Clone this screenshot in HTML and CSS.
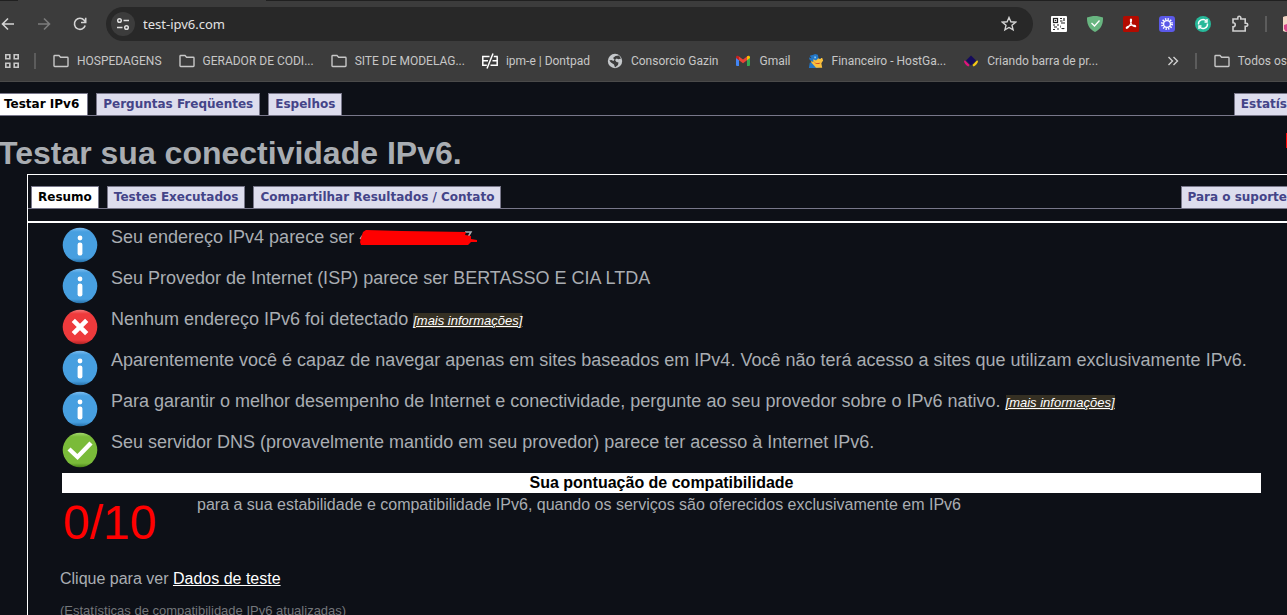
FILE: index.html
```html
<!DOCTYPE html>
<html lang="pt-BR">
<head>
<meta charset="UTF-8">
<meta name="viewport" content="width=device-width, initial-scale=1.0">
<title>Testar sua conectividade IPv6.</title>
<link rel="stylesheet" href="styles.css">
</head>
<body>

<svg class="defs" width="0" height="0">
    <defs>
        <linearGradient id="blue" x1="0" y1="0" x2="0" y2="1">
            <stop offset="0" stop-color="#7dbdf0"/><stop offset=".12" stop-color="#479fe0"/><stop offset=".88" stop-color="#479fe0"/><stop offset="1" stop-color="#256da5"/>
        </linearGradient>
        <linearGradient id="red" x1="0" y1="0" x2="0" y2="1">
            <stop offset="0" stop-color="#f47c7c"/><stop offset=".12" stop-color="#ee3a3c"/><stop offset=".88" stop-color="#ee3a3c"/><stop offset="1" stop-color="#a92022"/>
        </linearGradient>
        <linearGradient id="green" x1="0" y1="0" x2="0" y2="1">
            <stop offset="0" stop-color="#a5d66e"/><stop offset=".12" stop-color="#7abb39"/><stop offset=".88" stop-color="#7abb39"/><stop offset="1" stop-color="#4b8219"/>
        </linearGradient>
        <symbol id="info" viewBox="0 0 36 36">
            <circle cx="18" cy="18" r="17.3" fill="url(#blue)"/>
            <circle cx="18" cy="11" r="2.4" fill="#fff"/>
            <rect x="15.6" y="15.5" width="4.8" height="13" rx="2.2" fill="#fff"/>
        </symbol>
        <symbol id="fail" viewBox="0 0 36 36">
            <circle cx="18" cy="18" r="17.3" fill="url(#red)"/>
            <path d="M11.3 11.3l13.4 13.4M24.7 11.3L11.3 24.7" stroke="#fff" stroke-width="4.6"/>
        </symbol>
        <symbol id="ok" viewBox="0 0 36 36">
            <circle cx="18" cy="18" r="17.3" fill="url(#green)"/>
            <path d="M7 17l8.500 8L29 11" fill="none" stroke="#fff" stroke-width="4.400"/>
        </symbol>
        <symbol id="folder" viewBox="0 0 16 14">
            <path d="M1.700 1.500H6l1.600 1.800h6.700c.4 0 .7.300.7.700v7.800c0 .4-.3.700-.7.700H1.700c-.4 0-.7-.3-.7-.7V2.200c0-.4.3-.7.700-.7z" fill="none" stroke="#c7c7c7" stroke-width="1.400"/>
        </symbol>
    </defs>
</svg>

<header class="browser">
    <div class="strip"><span class="active-tab"></span></div>
    <div class="toolbar">
        <div class="nav">
            <button class="icon-btn" aria-label="Voltar"><svg width="16" height="16" viewBox="0 0 16 16" fill="none" stroke="#d4d4d4" stroke-width="1.600"><path d="M14 8H3M8 2.500L2.500 8 8 13.500"/></svg></button>
            <button class="icon-btn" aria-label="Avançar"><svg width="16" height="16" viewBox="0 0 16 16" fill="none" stroke="#7c7c7c" stroke-width="1.600"><path d="M2 8h11M8 2.500L13.500 8 8 13.500"/></svg></button>
            <button class="icon-btn" aria-label="Recarregar"><svg width="16" height="16" viewBox="0 0 16 16" fill="none" stroke="#d4d4d4" stroke-width="1.600"><path d="M13.200 9.500A5.500 5.500 0 1 1 12.200 4.300L13.500 6"/><path d="M13.700 1.800v4.700H9"/></svg></button>
        </div>
        <div class="omnibox">
            <button class="site-info" aria-label="Informações do site"><svg width="14" height="14" viewBox="0 0 14 14" fill="none" stroke="#dedede" stroke-width="1.500"><circle cx="3.500" cy="3.500" r="1.800"/><path d="M7.500 3.500H13M1 10.500h5.500"/><circle cx="10.500" cy="10.500" r="1.800"/></svg></button>
            <input class="url" type="text" value="test-ipv6.com" aria-label="Endereço">
            <button class="icon-btn" aria-label="Favorito"><svg width="16" height="16" viewBox="0 0 16 16" fill="none" stroke="#d4d4d4" stroke-width="1.400"><path d="M8 1.500l1.900 4.300 4.700.4-3.600 3.100 1.100 4.600L8 11.500l-4.100 2.400L5 9.300 1.400 6.200l4.700-.4z"/></svg></button>
        </div>
        <div class="extensions">
            <svg width="16" height="16" viewBox="0 0 16 16"><rect width="16" height="16" rx="1" fill="#fff"/><g fill="none" stroke="#222" stroke-width="1.200"><rect x="2.500" y="2.500" width="4" height="4"/><path d="M9 2.500h2M13 2v3M9 5h2.500M10 7h4M2 9h2M6 9h2M3 11h3M2 13.500h2M6 13h2"/></g><circle cx="4.500" cy="4.500" r=".8" fill="#222"/><path d="M10 9v3h4a2.300 2.300 0 1 1-4-3z" fill="#222"/></svg>
            <svg width="16" height="16" viewBox="1 1 16 16"><path d="M9 1c2.500 0 6 .7 8 1.500C17.200 10 14.500 14 9 17 3.500 14 .8 10 1 2.500 3 1.700 6.500 1 9 1z" fill="#68b580"/><path d="M5.500 8l3 3 5-5.500" fill="none" stroke="#fff" stroke-width="1.300"/></svg>
            <svg width="16" height="16" viewBox="0 0 16 16"><rect width="16" height="16" rx="1.500" fill="#b30b00"/><path d="M7.800 3c1.300-.2.800 3-1 6.200-1.200 2.200-3 3.600-3.500 3-.7-.8 2.500-2.500 5.200-2.900 2.300-.3 4.200.1 4.200.9 0 1-2.300.4-3.700-1.300C7.500 7 6.800 3.200 7.800 3z" fill="none" stroke="#fff" stroke-width="1.100"/></svg>
            <svg width="16" height="16" viewBox="0 0 16 16"><rect width="16" height="16" rx="3" fill="#5b59e8"/><circle cx="8" cy="8" r="3.400" fill="none" stroke="#fff" stroke-width="1.300"/><circle cx="8" cy="8" r="5" fill="none" stroke="#fff" stroke-width="1.900" stroke-dasharray="1.300 1.318"/></svg>
            <svg width="16" height="16" viewBox="0 0 16 16"><circle cx="8" cy="8" r="8" fill="#27b99a"/><g fill="none" stroke="#fff" stroke-width="1.400"><path d="M3.500 8.500A4.500 4.500 0 0 1 11.300 5M12.500 7.500A4.500 4.500 0 0 1 4.700 11"/><path d="M12 3v3H9.500M4 13v-3h2.500"/></g></svg>
            <svg width="18" height="18" viewBox="0 0 18 18" fill="none" stroke="#d0d0d0" stroke-width="1.600"><path d="M2 4h4.800V2.800a1.500 1.500 0 0 1 3 0V4h4.400v4.300h1a1.500 1.500 0 0 1 0 3h-1V16H2v-4.200c3 0 3-4 0-4z"/></svg>
            <span class="divider"></span>
            <svg class="avatar" width="4" height="16" viewBox="0 0 4 16"><path d="M4 0a8 8 0 0 0 0 16z" fill="#f3d5c5"/><path d="M1 9l3-1v8a8 8 0 0 1-3-3z" fill="#d8458b"/></svg>
        </div>
    </div>
    <nav class="bookmarks">
        <button class="apps" aria-label="Apps"><svg width="16" height="16" viewBox="0 0 16 16" fill="none" stroke="#c7c7c7" stroke-width="1.600"><path d="M1.800 1.800h4v4h-4zM10.200 1.800h4v4h-4zM1.800 10.200h4v4h-4zM10.200 10.200h4v4h-4z"/></svg></button>
        <span class="divider"></span>
        <a class="bookmark" href="#"><svg width="16" height="14"><use href="#folder"/></svg>HOSPEDAGENS</a>
        <a class="bookmark" href="#"><svg width="16" height="14"><use href="#folder"/></svg>GERADOR DE CODI...</a>
        <a class="bookmark" href="#"><svg width="16" height="14"><use href="#folder"/></svg>SITE DE MODELAG...</a>
        <a class="bookmark" href="#"><svg width="16" height="16" viewBox="0 0 16 16" fill="none" stroke="#fff" stroke-width="1.500"><path d="M7.500 3.500H.8v8.800h4M1 7.800h5M15.800 3.500h-4M10.500 7.800h5M8.500 12.300h6.700V3.500M11 .5L5 15.500"/></svg>ipm-e | Dontpad</a>
        <a class="bookmark" href="#"><svg width="16" height="16" viewBox="0 0 16 16"><circle cx="8" cy="8" r="7.200" fill="#c5c8cb"/><path d="M8.500 3l3.500-.5 2 3-2.500.7-2-.7-1.500 1.500L9.500 9l2 .5-.5 2.500-3 2.500-1-3-3-2-1.700-2 2-.5L6.500 8l1-1.500L6 5z" fill="#3c3c3c"/></svg>Consorcio Gazin</a>
        <a class="bookmark" href="#"><svg width="16" height="16" viewBox="0 0 16 16"><path d="M1 4.500l3 2.200V13H2a1 1 0 0 1-1-1z" fill="#4285f4"/><path d="M15 4.500l-3 2.200V13h2a1 1 0 0 0 1-1z" fill="#34a853"/><path d="M4 3.500l4 3 4-3v3.700l-4 3-4-3z" fill="#ea4335"/><path d="M1 4.500C1 2.500 2.800 2.200 4 3.300v3.900L1 5z" fill="#c5221f"/><path d="M15 4.500c0-2-1.800-2.300-3-1.200v3.900L15 5z" fill="#fbbc04"/></svg>Gmail</a>
        <a class="bookmark" href="#"><svg width="16" height="16" viewBox="0 0 18 16"><path d="M2 2l4-1 2-1 3 1 1 4-2 4 2 7H1l1-6 3-1-3-2-1-3 3 1z" fill="#2377c8"/><path d="M6 6l3 1.500 2-2 1-1h4l1 3-2 3 1 5H9L4 10l-1-2 3 1z" fill="#fac03d"/><path d="M6 8l3 2.500 5-.5-1.500 1.500H9z" fill="#d2492d"/><path d="M7 3h2v2H7z" fill="#82c5ef"/><path d="M12 4h2.500v1.500H12z" fill="#123866"/></svg>Financeiro - HostGa...</a>
        <a class="bookmark" href="#"><svg width="16" height="16" viewBox="0 0 16 16"><path d="M8 2.500l5 5-5 5-5-5z" fill="#160b5c"/><path d="M1.800 7.200l4.700 4.800-1 1.400C3.500 13 1.500 10.500 1 8.500z" fill="#e4127f"/><path d="M14.200 7.200L9.500 12l1 1.400c2-.4 4-2.900 4.500-4.900z" fill="#f6c915"/></svg>Criando barra de pr...</a>
        <button class="more" aria-label="Mais favoritos"><svg width="12" height="12" viewBox="0 0 12 12" fill="none" stroke="#d0d0d0" stroke-width="1.400"><path d="M1.500 2l4 4-4 4M6.500 2l4 4-4 4"/></svg></button>
        <span class="divider"></span>
        <a class="bookmark" href="#"><svg width="16" height="14"><use href="#folder"/></svg>Todos os</a>
    </nav>
</header>

<main class="page">
    <nav class="tabs">
        <a class="tab current" href="#">Testar IPv6</a>
        <a class="tab" href="#">Perguntas Freqüentes</a>
        <a class="tab" href="#">Espelhos</a>
        <a class="tab last" href="#">Estatís</a>
    </nav>

    <div class="title-row">
        <h1>Testar sua conectividade IPv6.</h1>
        <span class="mark"></span>
    </div>

    <section class="panel">
        <nav class="tabs inner">
            <a class="tab current" href="#">Resumo</a>
            <a class="tab" href="#">Testes Executados</a>
            <a class="tab" href="#">Compartilhar Resultados / Contato</a>
            <a class="tab last" href="#">Para o suporte</a>
        </nav>

        <div class="results">
            <ul class="checks">
                <li><svg class="status"><use href="#info"/></svg><span>Seu endereço IPv4 parece ser <svg class="scribble" width="118" height="18" viewBox="0 0 118 18"><path d="M1 10l3-4M106 3h6l-3 5" fill="none" stroke="#a9adb2" stroke-width="1.500"/><path d="M4 3l3-2 36 1 64 1-1 3 6 1v3l6 1v2h-6l-3 3H2l-1-3 1-4z" fill="#f00"/></svg></span></li>
                <li><svg class="status"><use href="#info"/></svg><span>Seu Provedor de Internet (ISP) parece ser BERTASSO E CIA LTDA</span></li>
                <li><svg class="status"><use href="#fail"/></svg><span>Nenhum endereço IPv6 foi detectado <a class="details" href="#">[mais informações]</a></span></li>
                <li><svg class="status"><use href="#info"/></svg><span>Aparentemente você é capaz de navegar apenas em sites baseados em IPv4. Você não terá acesso a sites que utilizam exclusivamente IPv6.</span></li>
                <li><svg class="status"><use href="#info"/></svg><span>Para garantir o melhor desempenho de Internet e conectividade, pergunte ao seu provedor sobre o IPv6 nativo. <a class="details" href="#">[mais informações]</a></span></li>
                <li><svg class="status"><use href="#ok"/></svg><span>Seu servidor DNS (provavelmente mantido em seu provedor) parece ter acesso à Internet IPv6.</span></li>
            </ul>

            <h2 class="score-title">Sua pontuação de compatibilidade</h2>
            <div class="score-row">
                <span class="score">0/10</span>
                <span>para a sua estabilidade e compatibilidade IPv6, quando os serviços são oferecidos exclusivamente em IPv6</span>
            </div>

            <p class="test-data">Clique para ver <a href="#">Dados de teste</a></p>
            <p class="updated">(Estatísticas de compatibilidade IPv6 atualizadas)</p>
        </div>
    </section>
</main>

</body>
</html>
```
FILE: styles.css
```css
* {
    box-sizing: border-box;
}
body {
    margin: 0;
    height: 100vh;
    overflow: hidden;
    background-color: #0d1017;
    color: #a9adb2;
    font-family: "Liberation Sans", Arial, sans-serif;
    font-size: 16px;
}
svg {
    flex-shrink: 0;
}
button {
    display: flex;
    align-items: center;
    justify-content: center;
    padding: 0;
    border: none;
    background: none;
    cursor: pointer;
}
.defs {
    position: absolute;
}

/* browser bar */
.browser {
    height: 82px;
    background-color: #3c3c3c;
    border-bottom: 1px solid #4a4a4a;
    font-family: "Noto Sans", "Open Sans", sans-serif;
}
.strip {
    height: 1px;
    padding-left: 18px;
    background-color: #202020;
}
.active-tab {
    display: block;
    width: 248px;
    height: 1px;
    background-color: #3c3c3c;
}
.toolbar {
    display: flex;
    align-items: center;
    height: 46px;
}
.nav {
    display: flex;
    gap: 20px;
    width: 106px;
}
.icon-btn {
    width: 16px;
    height: 16px;
}
.omnibox {
    display: flex;
    flex: 1;
    align-items: center;
    height: 34px;
    padding: 0 16px 0 5px;
    border-radius: 17px;
    background-color: #282828;
}
.site-info {
    width: 24px;
    height: 24px;
    border-radius: 12px;
    background-color: #3c3c3c;
}
.url {
    flex: 1;
    min-width: 0;
    padding: 0 8px;
    border: none;
    outline: none;
    background: none;
    color: #e3e3e3;
    font-family: inherit;
    font-size: 13px;
}
.extensions {
    display: flex;
    align-items: center;
    gap: 20px;
    padding-left: 18px;
}
.divider {
    width: 2px;
    height: 16px;
    background-color: #5c5c5c;
}
.extensions .divider,
.avatar {
    margin-left: -4px;
}
.bookmarks {
    display: flex;
    align-items: center;
    height: 28px;
    padding-left: 4px;
    white-space: nowrap;
}
.apps {
    margin-right: 14px;
}
.bookmark {
    display: flex;
    align-items: center;
    gap: 8px;
    margin-left: 17px;
    color: #c7c7c7;
    font-family: Roboto, "Noto Sans", sans-serif;
    font-size: 12px;
    text-decoration: none;
}
.more {
    margin-left: auto;
    margin-right: 16px;
}

/* tabs */
.tabs {
    display: flex;
    gap: 8px;
    padding-top: 11px;
    border-bottom: 1px solid #78778a;
}
.tab {
    height: 22px;
    padding: 0 6px;
    border: 1px solid #78778a;
    border-bottom: none;
    background-color: #dddded;
    color: #444488;
    font-family: "DejaVu Sans", Verdana, sans-serif;
    font-size: 12px;
    font-weight: bold;
    line-height: 21px;
    text-decoration: none;
    white-space: nowrap;
}
.tab.current {
    background-color: #fff;
    color: #000;
}
.tab.last {
    margin-left: auto;
    padding-right: 0;
    border-right: none;
}
.page > .tabs .current {
    padding: 0 8px 0 4px;
    border-left: none;
}
.inner {
    padding-left: 3px;
}

.title-row {
    display: flex;
    justify-content: space-between;
    padding-top: 17px;
}
h1 {
    margin: 0 0 0 -2px;
    font-size: 32px;
    line-height: 41px;
}
.mark {
    width: 1px;
    height: 15px;
    background-color: #f00;
}
.panel {
    margin-left: 27px;
    border-top: 1px solid #fff;
    border-left: 1px solid #fff;
}
.results {
    margin-top: 12px;
    padding: 4px 26px 0 34px;
    border-top: 2px solid #fff;
}
.checks {
    margin: 0;
    padding: 0;
    list-style: none;
    font-size: 18px;
    line-height: 20px;
}
.checks li {
    display: flex;
    gap: 13px;
    height: 41px;
    white-space: nowrap;
}
.status {
    width: 36px;
    height: 36px;
}
.scribble {
    vertical-align: -4px;
}
.details {
    background-color: #353023;
    color: #fff;
    font-size: 13px;
    font-style: italic;
}
.score-title {
    margin: 0;
    background-color: #fff;
    color: #000;
    font-size: 16px;
    line-height: 20px;
    text-align: center;
}
.score-row {
    display: flex;
    line-height: 24px;
}
.score {
    width: 135px;
    padding-left: 1px;
    color: #f00;
    font-size: 48px;
    line-height: 60px;
}
.test-data {
    margin: 16px 0 0 -2px;
    line-height: 20px;
}
.test-data a {
    color: #fff;
}
.updated {
    margin: 14px 0 0 -2px;
    color: #74777b;
    font-size: 13px;
    line-height: 16px;
}
```
